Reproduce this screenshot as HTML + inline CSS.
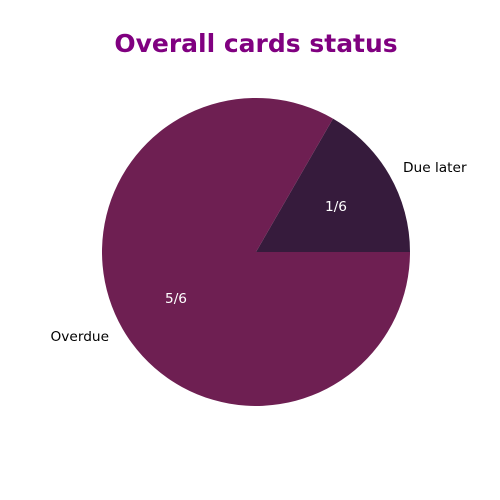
<!DOCTYPE html>
<html><head><style>html,body{margin:0;padding:0;background:#fff;width:500px;height:500px;overflow:hidden}</style></head>
<body>
<svg width="500" height="500" xmlns="http://www.w3.org/2000/svg" font-family="DejaVu Sans, Liberation Sans, sans-serif">
<text x="256" y="52" text-anchor="middle" font-size="25" font-weight="bold" fill="#800080">Overall cards status</text>
<path d="M256,252 L410,252 A154,154 0 0,0 333,118.6 Z" fill="#361b3c"/>
<path d="M256,252 L333,118.6 A154,154 0 1,0 410,252 Z" fill="#6e1f52"/>
<text x="336" y="211" text-anchor="middle" font-size="13.7" fill="#fff">1/6</text>
<text x="176" y="303" text-anchor="middle" font-size="13.7" fill="#fff">5/6</text>
<text x="403" y="172" font-size="13.7" fill="#000">Due later</text>
<text x="109" y="341" text-anchor="end" font-size="13.7" fill="#000">Overdue</text>
</svg>
</body></html>
